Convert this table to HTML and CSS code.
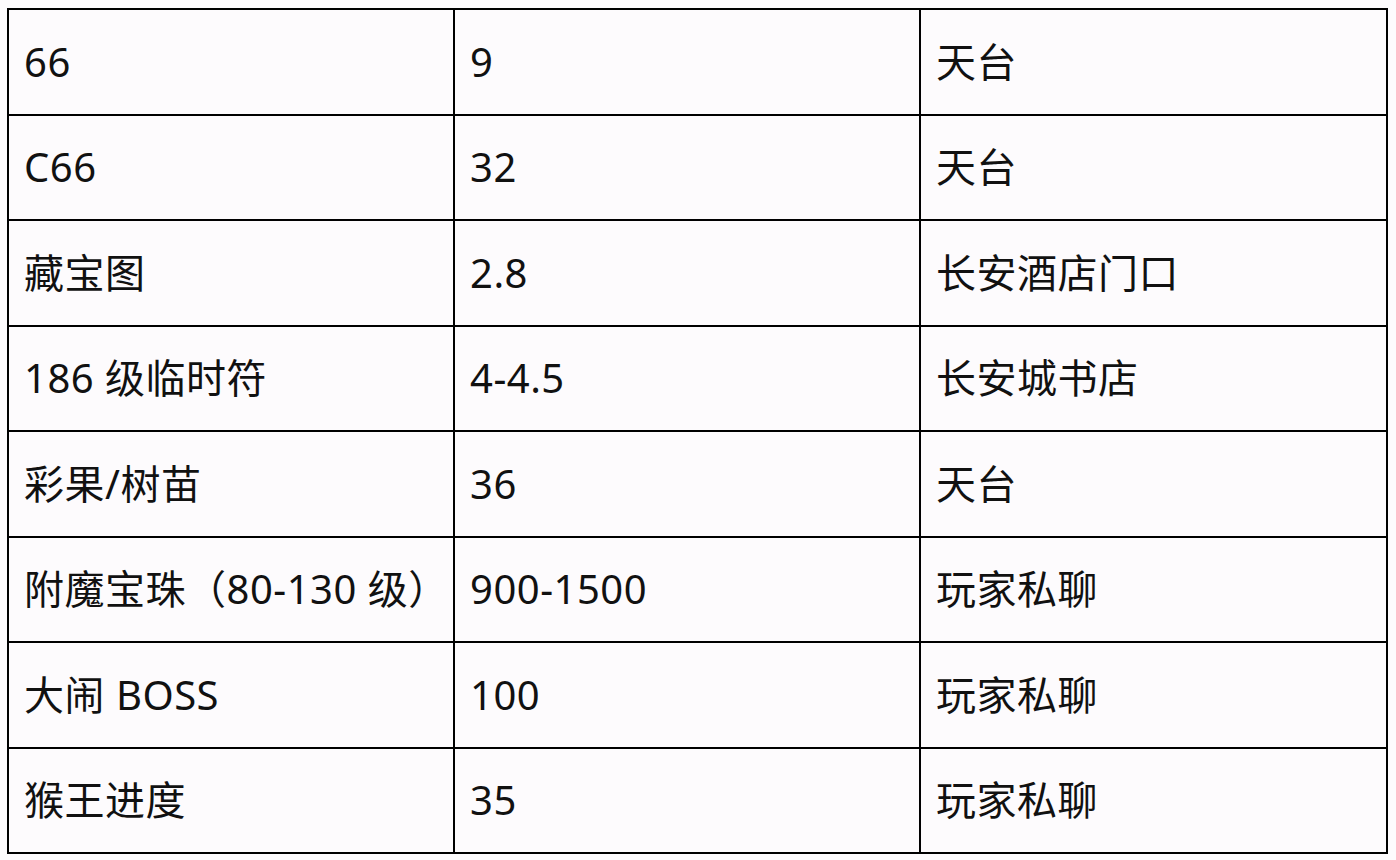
FILE: index.html
```html
<!DOCTYPE html>
<html lang="zh-CN">
<head>
<meta charset="utf-8">
<title>价格表</title>
<link rel="stylesheet" href="styles.css">
</head>
<body>
<table class="price-table">
  <colgroup>
    <col class="col-name">
    <col class="col-price">
    <col class="col-place">
  </colgroup>
  <tbody>
    <tr><td>66</td><td>9</td><td>天台</td></tr>
    <tr><td>C66</td><td>32</td><td>天台</td></tr>
    <tr><td>藏宝图</td><td>2.8</td><td>长安酒店门口</td></tr>
    <tr><td>186 级临时符</td><td>4-4.5</td><td>长安城书店</td></tr>
    <tr><td>彩果/树苗</td><td>36</td><td>天台</td></tr>
    <tr><td>附魔宝珠（80-130 级）</td><td>900-1500</td><td>玩家私聊</td></tr>
    <tr><td>大闹 BOSS</td><td>100</td><td>玩家私聊</td></tr>
    <tr><td>猴王进度</td><td>35</td><td>玩家私聊</td></tr>
  </tbody>
</table>
</body>
</html>
```

FILE: styles.css
```css
html, body {
  margin: 0;
  padding: 0;
  background: #fdfbfd;
}
body {
  padding: 8px 0 0 7px;
  font-family: "Noto Sans", "Noto Sans CJK SC", sans-serif;
  color: #111;
}
.price-table {
  border-collapse: collapse;
  table-layout: fixed;
  width: 1379px;
}
.col-name { width: 446px; }
.col-price { width: 466px; }
.col-place { width: 467px; }
.price-table td {
  border: 2px solid #000;
  height: 103.5px;
  padding: 0 0 0 15px;
  font-size: 40px;
  line-height: 1;
  letter-spacing: 0.5px;
  vertical-align: middle;
  white-space: nowrap;
}
```
